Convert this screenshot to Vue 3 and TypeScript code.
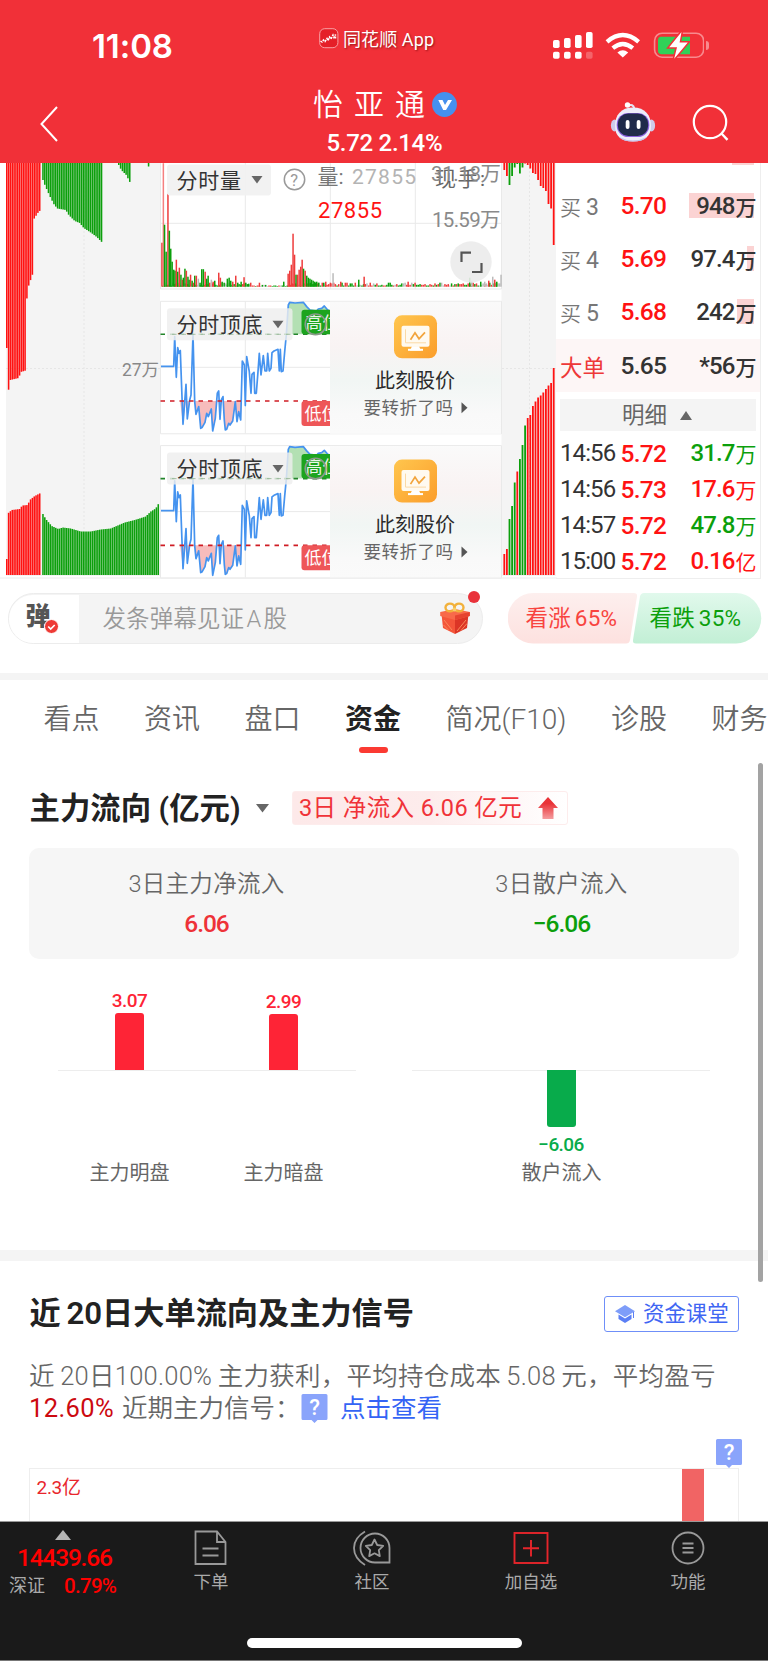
<script setup lang="ts">
type Bar = { x: number; y: number; h: number; c: string }
type Pt = [number, number]

const RED = '#ff1212'
const GREEN = '#0c9f0c'

// Linear interpolation through a list of profile points.
function at(profile: Pt[], x: number): number {
  if (x <= profile[0][0]) return profile[0][1]
  for (let i = 1; i < profile.length; i++) {
    const [x1, y1] = profile[i]
    if (x <= x1) {
      const [x0, y0] = profile[i - 1]
      return y0 + ((y1 - y0) * (x - x0)) / (x1 - x0 || 1)
    }
  }
  return profile[profile.length - 1][1]
}

function fill(profile: Pt[], c: string, base: number, down: boolean): Bar[] {
  const out: Bar[] = []
  const start = profile[0][0]
  const end = profile[profile.length - 1][0]
  for (let x = start; x <= end + 0.01; x += 1.83) {
    const y = at(profile, x)
    out.push(down ? { x, y: base, h: y - base, c } : { x, y, h: base - y, c })
  }
  return out
}

const topRed: Pt[] = [[6, 185], [7.6, 227], [8.4, 226], [9.5, 217], [18, 215], [20, 209], [25, 207.5], [26.2, 131], [28.5, 120], [31.6, 113], [32.5, 57], [34.5, 54], [37, 50], [39.8, 47]]
const topGreen: Pt[] = [[42.2, 17], [44.5, 23], [49, 33], [53, 41], [56.5, 45.5], [65, 47], [68, 52], [74, 58], [79, 60], [83, 65], [90, 69.5], [96, 74], [102.4, 80.5]]
const topGreen2: Pt[] = [[118, 2], [120.5, 7], [125.5, 12], [128, 17], [129.8, 20.5]]
const lowRed: Pt[] = [[6, 396], [7.6, 350], [11, 347], [19, 346], [21.5, 342.5], [27, 342], [29, 337], [34, 333], [39.8, 330]]
const lowGreen: Pt[] = [[42.2, 351], [45, 356], [51, 363], [57.5, 366], [62, 364.5], [70, 365.5], [80, 368.5], [90, 368.5], [100, 366.5], [110, 365.5], [117, 362.5], [124, 359.5], [134, 357], [145, 353.5], [150, 348.5], [155, 345.5], [157.6, 341]]

const leftBars: Bar[] = [
  ...fill(topRed, RED, 0, true),
  ...fill(topGreen, GREEN, 0, true),
  ...fill(topGreen2, GREEN, 0, true),
  { x: 147.8, y: 0, h: 3.5, c: GREEN },
  ...fill(lowRed, RED, 412, false),
  ...fill(lowGreen, GREEN, 412, false),
]

const rTop: [number, string][] = [[7, 'r'], [13, 'r'], [22, 'g'], [13, 'g'], [4.5, 'g'], [1, 'g'], [10.5, 'g'], [4.5, 'g'], [0.5, 'r'], [2, 'r'], [5.5, 'r'], [10, 'r'], [11, 'r'], [17, 'r'], [23, 'r'], [25, 'r'], [28, 'r'], [41, 'r'], [45.5, 'r'], [82, 'r']]
const rLow: [number, string][] = [[391, 'r'], [386, 'r'], [356, 'g'], [343, 'g'], [319.5, 'g'], [308.5, 'r'], [296, 'g'], [282, 'g'], [262.5, 'g'], [255, 'r'], [252, 'r'], [243, 'r'], [238.5, 'r'], [234.5, 'r'], [232.5, 'r'], [229.5, 'r'], [226, 'r'], [222.5, 'r'], [220, 'r'], [205, 'r']]
const tone = (c: string): string => (c === 'r' ? RED : GREEN)
const rightBars: Bar[] = [
  ...rTop.map(([h, c], i) => ({ x: 503.4 + i * 2.6, y: 0, h, c: tone(c) })),
  ...rLow.map(([y, c], i) => ({ x: 503.4 + i * 2.6, y, h: 412 - y, c: tone(c) })),
]

const volColor: Record<string, string> = { r: '#ee3c3c', g: GREEN, s: '#bbbbbb', p: '#f58080' }
const vol: [number, number, string][] = [
  [161.2, 44, 'r'], [162.6, 123.5, 'p'], [163.8, 62, 'g'], [165.4, 35, 'g'], [167.2, 93, 'r'], [168.6, 56, 'g'], [170, 38, 'g'], [171.4, 25, 'g'], [173, 17, 'g'], [174.3, 16, 'g'], [175.6, 27, 'r'], [177, 15, 'g'], [178.6, 19, 'r'], [180.2, 12, 'g'], [181.6, 7, 'r'], [182.6, 9, 'g'], [184.2, 18, 'g'], [185.6, 16, 'r'], [187.2, 10, 'g'], [188.4, 7, 'g'], [189.8, 12, 'r'], [191.4, 6, 'g'], [192.8, 4, 'r'], [194, 11, 'g'], [195.6, 11, 'r'], [197.6, 8, 's'], [199.3, 4, 'g'], [201, 17.5, 'g'], [202.6, 17.5, 'g'], [204.4, 15, 'r'], [206, 8, 'g'], [207.4, 11, 'g'], [209, 4, 'r'], [210.6, 7, 's'], [212.4, 5, 'r'], [214, 6, 'g'], [218, 14, 'r'], [219.6, 9, 'r'], [221.4, 5, 'g'], [226.6, 8, 'g'], [228.4, 9, 'g'], [230, 6, 'g'], [232, 5, 'r'], [235, 11, 'r'], [237, 4, 'g'], [240.4, 5, 'g'], [243.3, 9.5, 'r'], [245, 4, 'g'], [248, 3, 'g'], [258.7, 4, 'r'], [283, 5, 'g'], [287.4, 13, 'r'], [289, 16, 'r'], [290.6, 22, 'r'], [292.3, 53, 'r'], [293.8, 32, 'r'], [295.3, 12, 'g'], [296.8, 12, 'r'], [298.4, 17, 'r'], [300, 20, 'r'], [301.4, 27, 'r'], [302.8, 18, 'g'], [304.4, 16, 'r'], [306, 11, 'g'], [307.6, 9, 'g'], [309.2, 8, 'g'], [310.8, 7, 'g'], [312.4, 6, 'g'], [314, 5, 'g'], [316, 5, 'g'], [318, 4, 'g'], [321.5, 4, 'r'], [325, 5, 'r'], [332.3, 13.5, 's'], [340, 5, 'r'], [358, 7, 'g'], [363.4, 10, 'r'], [407.4, 5, 'r'], [469, 9, 'g'], [471, 6, 's'], [480, 5, 'g'], [484, 5, 's'], [488, 6, 'r'], [492, 10, 's'], [494, 7, 'r'], [496, 5, 'g'], [500.3, 12, 's'],
]
const fillers: [number, number, string][] = Array.from({ length: 204 }, (_, i) => {
  const k = (i * 37 + ((i * i) % 23)) % 17
  const x = 162 + i * 1.66
  const quiet = x > 250 && x < 286
  return [x, quiet ? 0.6 + (k % 3) * 0.6 : 1.2 + (k % 5) * 0.7, k < 7 ? 'g' : k < 13 ? 'r' : 's'] as [number, number, string]
})
const volBars: Bar[] = [...fillers, ...vol].map(([x, h, c]) => ({ x, y: 123.7 - h, h, c: volColor[c] }))

const wave: Pt[] = [
  [18, 244], [56, 244], [59, 155], [64, 277], [68, 188], [72, 205], [76, 197], [84, 418], [93, 298], [97, 402], [104, 345], [108, 330], [114, 148], [119, 350], [123, 388], [131, 365], [137, 430], [141, 428], [150, 412], [155, 385], [160, 395], [169, 372], [173, 438], [181, 400], [187, 325], [191, 318], [195, 403], [199, 345], [204, 335], [208, 405], [211, 435], [215, 433], [221, 415], [225, 420], [233, 408], [241, 350], [246, 410], [251, 380], [257, 405], [262, 228], [268, 240], [271, 362], [275, 215], [283, 260], [288, 325], [291, 268], [297, 262], [299, 325], [304, 325], [309, 260], [313, 205], [318, 270], [325, 212], [330, 258], [335, 258], [338, 205], [343, 258], [348, 250], [351, 203], [357, 198], [369, 193], [373, 258], [376, 193], [379, 260], [384, 258], [389, 200], [394, 150], [400, 60], [404, 52], [420, 54], [445, 52], [455, 65], [465, 75], [485, 78], [490, 72], [500, 70], [508, 63], [518, 75], [525, 80],
]
const toPoint = ([x, y]: Pt): string => `${(x / 3 - 5).toFixed(1)},${((y - 49) / 3).toFixed(1)}`
const wavePoints = wave.map(toPoint).join(' ')
const highArea = ['126.500,33', ...wave.filter((p) => p[0] >= 394).map(toPoint), '170,33'].join(' ')
const lowArea = ['20,99.7', ...wave.filter((p) => p[0] > 77 && p[0] < 262).map(([x, y]) => toPoint([x, Math.max(y, 348)])), '82,99.7'].join(' ')
const panels = [138.3, 282.6]

const bids = [
  { n: '3', p: '5.70', v: '948', w: 65 },
  { n: '4', p: '5.69', v: '97.4', w: 7 },
  { n: '5', p: '5.68', v: '242', w: 17 },
]
const ticks = [
  { t: '14:56', p: '5.72', v: '31.7', u: '万', c: 'down' },
  { t: '14:56', p: '5.73', v: '17.6', u: '万', c: 'up' },
  { t: '14:57', p: '5.72', v: '47.8', u: '万', c: 'down' },
  { t: '15:00', p: '5.72', v: '0.16', u: '亿', c: 'up' },
]
const tabs = ['看点', '资讯', '盘口', '资金', '简况(F10)', '诊股', '财务']
</script>

<template>
  <div class="page">
    <header class="head">
      <div class="status">
        <span class="clock">11:08</span>
        <span class="app">
          <svg width="20" height="21" viewBox="0 0 20 21">
            <rect x=".7" y=".7" width="18.2" height="19" rx="5" fill="#e51f28" stroke="#f9a0a4" stroke-width="1" />
            <path d="M1.5 13l1.500 1 1.500-2 1.500 1.500 2-3 1 2 1.500-3.500 1.500 2 2-4 1 2.500 1.500-3v5" fill="none" stroke="#fff" stroke-width="1.500" stroke-dasharray="2.200 .9" />
          </svg>
          <span>同花顺 App</span>
        </span>
        <svg class="sys" width="152" height="28" viewBox="552 31 152 28">
          <g fill="#fff">
            <rect x="553" y="40" width="6.6" height="8" rx="1.8" /><rect x="564" y="38" width="6.6" height="10" rx="1.8" />
            <rect x="575" y="35" width="6.6" height="13" rx="1.8" /><rect x="586" y="32" width="6.6" height="16" rx="1.8" />
            <rect x="553" y="51.7" width="6.6" height="7" rx="1.8" /><rect x="564" y="51.7" width="6.6" height="7" rx="1.8" />
            <rect x="575" y="51.7" width="6.6" height="7" rx="1.8" /><rect x="586" y="51.7" width="6.6" height="7" rx="1.8" opacity=".25" />
            <path d="M622.8 57.6l-5.4-5.2q5.4-4.3 10.8 0z" />
          </g>
          <g fill="none" stroke="#fff" stroke-width="4.3">
            <path d="M607 41.8q15.8-13.4 31.6 0" /><path d="M612.8 48.2q10-8.3 20 0" />
          </g>
          <rect x="654.6" y="33.2" width="49" height="24" rx="7.5" fill="none" stroke="#f88a8e" stroke-width="1.6" />
          <path d="M661 36.8h29v17.4h-29q-3-.2-3-3.4v-10.6q0-3.2 3-3.4z" fill="#30d158" />
          <path d="M681.5 32l-12.3 15.3h7.8l-2.8 11.4 13.6-16.3h-8.2z" fill="#fff" stroke="#f13038" stroke-width="3" paint-order="stroke" />
        </svg>
        <i class="batcap"></i>
      </div>
      <div class="nav">
        <svg class="back" width="20" height="38" viewBox="0 0 20 38"><path d="M18 2L2.5 19 18 36" fill="none" stroke="#fff" stroke-width="2" /></svg>
        <div class="title">
          <div class="name">
            <span>怡</span><span>亚</span><span>通</span>
            <svg width="25" height="25" viewBox="0 0 25 25"><circle cx="12.5" cy="12.5" r="12.4" fill="#4690ee" /><path d="M6.3 8h4.2l2.5 5 3-5h4L14 18h-2.8z" fill="#fff" /></svg>
          </div>
          <div class="quote">5.72 2.14%</div>
        </div>
        <svg class="bot" width="46" height="42" viewBox="0 0 46 42">
          <path d="M18 5q5-3 6.500 3" fill="none" stroke="#e4e2f2" stroke-width="2" /><circle cx="17.500" cy="4" r="2.700" fill="#fff" />
          <ellipse cx="4.500" cy="24.500" rx="3.600" ry="6" fill="#cfcbea" /><ellipse cx="41.500" cy="24.500" rx="3.600" ry="6" fill="#cfcbea" />
          <path d="M23 6.500c12 0 18 7.500 18 18.500 0 10-6 15.500-18 15.500S5 35 5 25C5 14 11 6.500 23 6.500z" fill="#ededfa" />
          <path d="M9 36q14 7 28 0-4 4.500-14 4.500T9 36z" fill="#c4c0ea" />
          <rect x="6.700" y="12" width="32.600" height="24" rx="11.500" fill="#8c63e0" /><rect x="7.800" y="12.500" width="30.400" height="22.500" rx="10.500" fill="#1f2a4a" />
          <rect x="15.700" y="19" width="3.800" height="9" rx="1.900" fill="#fff" /><rect x="26.700" y="19" width="3.800" height="9" rx="1.900" fill="#fff" />
        </svg>
        <svg class="search" width="37" height="37" viewBox="0 0 37 37"><circle cx="18" cy="18" r="16.2" fill="none" stroke="#fff" stroke-width="2.2" /><path d="M29.500 29.500l6 6.300" stroke="#fff" stroke-width="2.4" /></svg>
      </div>
    </header>

    <section class="market">
      <svg class="charts" width="557" height="417" viewBox="0 0 557 417">
        <defs>
          <linearGradient id="gold" x1="0" y1="0" x2="1" y2="1"><stop offset="0" stop-color="#ffc64e" /><stop offset="1" stop-color="#fb9d2b" /></linearGradient>
          <linearGradient id="haze" x1="0" y1="0" x2="0" y2="1">
            <stop offset="0" stop-color="#fafafa" /><stop offset=".33" stop-color="#f9f3f3" /><stop offset=".6" stop-color="#f1f6f4" /><stop offset=".85" stop-color="#f9f9f9" /><stop offset="1" stop-color="#fafafa" />
          </linearGradient>
          <clipPath id="cut"><rect x="0" y="-1" width="170" height="135" /></clipPath>
        </defs>
        <rect x="6" y="0" width="154" height="413" fill="#f4f4f4" />
        <rect x="501.500" y="0" width="54.500" height="413" fill="#f4f4f4" />
        <g stroke="#e6e6e6" stroke-dasharray="2 2">
          <path d="M84 0V413M6 205.500H160M502 205.500H556M529.500 0V413" fill="none" />
        </g>
        <g>
          <rect v-for="(b, i) in leftBars" :key="'l' + i" :x="b.x" :y="b.y" width="1.550" :height="b.h" :fill="b.c" />
          <rect v-for="(b, i) in rightBars" :key="'r' + i" :x="b.x" :y="b.y" width="1.800" :height="b.h" :fill="b.c" />
        </g>
        <text x="122" y="213" class="cjk" font-size="17.500" fill="#888" textLength="37">27万</text>

        <g fill="none" stroke="#e9e9e9"><path d="M160.500 0V126H501.500V0M160.500 60.300H501.500M245.300 0V126M330.300 0V126M415.300 0V126" /></g>
        <rect v-for="(b, i) in volBars" :key="'v' + i" :x="b.x" :y="b.y" width="1.500" :height="b.h" :fill="b.c" />
        <rect x="167" y="1.500" width="104" height="31" rx="3" fill="#f1f1f1" opacity=".95" />
        <text x="176.500" y="24.500" class="cjk" font-size="21" fill="#333" textLength="64.500">分时量</text>
        <path d="M251.500 13h11l-5.500 7.500z" fill="#666" />
        <circle cx="294.500" cy="16.500" r="10.200" fill="none" stroke="#999" stroke-width="1.500" />
        <text x="290.300" y="22.500" class="num" font-size="16.500" fill="#999">?</text>
        <text x="317.500" y="20.500" class="cjk" font-size="21" fill="#777">量:</text>
        <text x="352" y="21" class="num" font-size="21" fill="#b4b4b4" textLength="64">27855</text>
        <text x="435" y="22.500" class="cjk" font-size="21" fill="#666" textLength="50">现手:</text>
        <text x="431" y="17.500" class="cjk" font-size="20.500" fill="#8a8a8a" textLength="70">31.18万</text>
        <text x="318" y="55" class="num" font-size="22" fill="#ff1212" textLength="64">27855</text>
        <text x="432" y="64" class="cjk" font-size="20.500" fill="#8a8a8a" textLength="68.500">15.59万</text>
        <circle cx="471" cy="99" r="20.700" fill="#ebebeb" opacity=".9" />
        <path d="M461.500 99V89.700H471M481.500 100V109H472" fill="none" stroke="#555" stroke-width="2.200" />

        <g v-for="y in panels" :key="y" :transform="`translate(160 ${y})`">
          <g fill="none" stroke="#e9e9e9"><path d="M.5 0H341.500V132.500H.5zM.5 66H170M85.300 0V132" /></g>
          <g clip-path="url(#cut)">
            <polygon :points="highArea" fill="#b3e0b3" />
            <polygon :points="lowArea" fill="#f7bcbc" />
            <polyline :points="wavePoints" fill="none" stroke="#4593ef" stroke-width="1.700" stroke-linejoin="round" />
            <path d="M.5 33H170" stroke="#23852b" stroke-width="1.600" stroke-dasharray="4.500 5" fill="none" />
            <path d="M.5 99.700H170" stroke="#cf1c24" stroke-width="1.700" stroke-dasharray="4.500 5" fill="none" />
            <rect x="141.500" y="8.500" width="36" height="24.500" rx="3" fill="#1da41f" />
            <text x="145.500" y="27.500" class="cjk" font-size="17" fill="#e8f5e8">高位</text>
            <circle cx="155.500" cy="23" r="10.300" fill="none" stroke="#8a9a8a" stroke-width="1.600" />
            <rect x="141.500" y="99.700" width="36" height="25" rx="3" fill="#ee5658" />
            <text x="144.500" y="118.500" class="cjk" font-size="17" fill="#fff">低位</text>
          </g>
          <rect x="7" y="7" width="125.500" height="32" rx="3" fill="#eee" opacity=".82" />
          <path d="M12 33H132" stroke="#86ac86" stroke-width="1" stroke-dasharray="4.500 5" fill="none" opacity=".7" />
          <text x="16.500" y="30.500" class="cjk" font-size="21" fill="#333" textLength="86">分时顶底</text>
          <path d="M112.500 19.500h11l-5.500 7.500z" fill="#666" />
          <rect x="170" y=".5" width="171" height="132" fill="url(#haze)" />
          <g transform="translate(234 14)">
            <rect width="43" height="43" rx="8" fill="url(#gold)" />
            <rect x="7.500" y="10.500" width="28" height="21" rx="2" fill="#fffaf0" /><path d="M18 31h7l2 4.200H16z" fill="#fff" /><path d="M14 34.500h15" stroke="#fff" stroke-width="2" />
            <path d="M11.500 14v13.500H32" fill="none" stroke="#fbd9a5" /><path d="M16.500 24.500l4.500-7 4 6 6-6.500" fill="none" stroke="#f2a43b" stroke-width="1.700" />
          </g>
          <text x="215" y="86.500" class="cjk" font-size="20" fill="#2b2b2b" textLength="80">此刻股价</text>
          <text x="203.500" y="112.500" class="cjk" font-size="17.500" fill="#666" textLength="89.500">要转折了吗</text>
          <path d="M301.500 101l6 5.500-6 5.500z" fill="#555" />
        </g>
        <path d="M0 415H768" stroke="#ececec" />
      </svg>
      <div class="book">
        <i class="rest"></i>
        <div v-for="b in bids" :key="b.n" class="row bid">
          <span class="lab">买<em>{{ b.n }}</em></span><span class="px">{{ b.p }}</span>
          <span class="amt"><i :style="{ width: b.w + 'px' }"></i><b>{{ b.v }}</b>万</span>
        </div>
        <div class="row bid big"><span class="lab">大单</span><span class="px">5.65</span><span class="amt"><b>*56</b>万</span></div>
        <div class="detail">明细<svg width="12" height="9" viewBox="0 0 12 9"><path d="M6 0l6 9H0z" fill="#666" /></svg></div>
        <div v-for="(k, i) in ticks" :key="i" class="row tick">
          <span class="time">{{ k.t }}</span><span class="px">{{ k.p }}</span><span class="amt" :class="k.c"><b>{{ k.v }}</b>{{ k.u }}</span>
        </div>
      </div>
    </section>

    <section class="danmu">
      <div class="pill">
        <div class="dan">弹<svg width="15" height="15" viewBox="0 0 15 15"><circle cx="7.500" cy="7.500" r="7" fill="#ee3a35" stroke="#fff" /><path d="M4.200 7.500l2.500 2.500 4-4" fill="none" stroke="#fff" stroke-width="1.700" /></svg></div>
        <div class="field">发条弹幕见证 A 股</div>
        <svg class="gift" width="32" height="33" viewBox="0 0 32 33">
          <path d="M2.500 12L16 17v15L4 26z" fill="#f4553a" /><path d="M29.500 12L16 17v15l12-6z" fill="#dc3526" />
          <path d="M1.200 10L16 7l14.800 3v4L16 18 1.200 14z" fill="#f8694a" /><path d="M16 18l14.800-4v-4L16 13.500z" fill="#e64330" />
          <path d="M18 29l9-11M22 28.500l6-7M5 18l8 10M4.500 23l5 5" stroke="#f98a5b" stroke-width="1" />
          <g fill="none" stroke="#f2b13b" stroke-width="2.400"><ellipse cx="11" cy="5.500" rx="4.500" ry="3.900" /><ellipse cx="20" cy="5.500" rx="4.500" ry="3.900" /></g>
          <circle cx="15.500" cy="7.500" r="2" fill="#f7cf6b" />
        </svg>
        <i class="dot"></i>
      </div>
      <div class="vote">
        <svg width="254" height="51" viewBox="0 0 254 51">
          <defs>
            <linearGradient id="vr" x1="0" y1="0" x2="0" y2="1"><stop offset="0" stop-color="#fdefee" /><stop offset="1" stop-color="#fde1df" /></linearGradient>
            <linearGradient id="vg" x1="0" y1="0" x2="0" y2="1"><stop offset="0" stop-color="#e1f9ec" /><stop offset="1" stop-color="#c2efd5" /></linearGradient>
          </defs>
          <path d="M25 0H126q3.500 0 3 3.500L122 47q-.6 3.500-4 3.500H25A25 25 0 0 1 25 0z" fill="url(#vr)" />
          <path d="M228 0H136q-3.400 0-4 3.500L125 47q-.5 3.500 3 3.500H228A25 25 0 0 0 228 0z" fill="url(#vg)" />
        </svg>
        <span class="bull">看涨 65%</span><span class="bear">看跌 35%</span>
      </div>
    </section>

    <nav class="tabs"><span v-for="t in tabs" :key="t" :class="{ on: t === '资金' }">{{ t }}</span></nav>

    <section class="flow">
      <div class="scroll"></div>
      <div class="ftitle">
        <h2>主力流向 (亿元)</h2>
        <svg width="13" height="9" viewBox="0 0 13 9"><path d="M0 0h13L6.500 8.500z" fill="#666" /></svg>
        <div class="chip">
          <span>3日 净流入 6.06 亿元</span>
          <svg width="20" height="22" viewBox="0 0 20 22"><defs><linearGradient id="ar" x1="0" y1="0" x2="0" y2="1"><stop offset=".3" stop-color="#e93338" /><stop offset="1" stop-color="#f59d9f" /></linearGradient></defs><path d="M10 0l10 11h-4.500v11h-11V11H0z" fill="url(#ar)" /></svg>
        </div>
      </div>
      <div class="card">
        <div><p>3日主力净流入</p><b class="r">6.06</b></div>
        <div><p>3日散户流入</p><b class="g">−6.06</b></div>
      </div>
      <div class="columns">
        <div class="plot two">
          <div class="col"><b>3.07</b><i class="h1"></i></div>
          <div class="col"><b>2.99</b><i class="h2"></i></div>
        </div>
        <div class="plot one"><div class="col neg"><i></i><b>−6.06</b></div></div>
      </div>
      <div class="names"><span>主力明盘</span><span>主力暗盘</span><span>散户流入</span></div>
    </section>

    <section class="signal">
      <div class="stitle">
        <h2>近 20日大单流向及主力信号</h2>
        <div class="btn">
          <svg width="20" height="18" viewBox="0 0 20 18"><path d="M10 0l10 6.200-10 6L0 6.200z" fill="#7e9df9" /><path d="M3.500 9.500L10 13.600l6.500-4.100v4.500L10 18l-6.500-4z" fill="#5b7ff5" /><path d="M18.500 7v6" stroke="#5b7ff5" /></svg>
          <span>资金课堂</span>
        </div>
      </div>
      <p class="para l1">近 20日100.00% 主力获利，平均持仓成本 5.08 元，平均盈亏</p>
      <div class="para l2">
        <span class="pct">12.60%</span><span class="sig">近期主力信号：</span>
        <svg class="q" width="27" height="29" viewBox="0 0 26 29"><path d="M1.500 0h23q1.500 0 1.500 1.500v23q0 1.500-1.500 1.500H16l-3 3-3-3H1.500Q0 26 0 24.500v-23Q0 0 1.500 0z" fill="#8aa4fb" /><text x="13" y="21" text-anchor="middle" class="num" font-size="22" font-weight="500" fill="#fff">?</text></svg>
        <span class="link">点击查看</span>
      </div>
      <svg class="q q2" width="26" height="29" viewBox="0 0 26 29"><path d="M1.500 0h23q1.500 0 1.500 1.500v23q0 1.500-1.500 1.500H16l-3 3-3-3H1.500Q0 26 0 24.500v-23Q0 0 1.500 0z" fill="#8aa4fb" /><text x="13" y="21" text-anchor="middle" class="num" font-size="22" font-weight="500" fill="#fff">?</text></svg>
      <div class="frame"><span>2.3亿</span><i></i></div>
    </section>

    <footer class="foot">
      <div class="items">
        <div class="index">
          <svg width="16" height="10" viewBox="0 0 16 10"><path d="M8 0l8 10H0z" fill="#b5b5b5" /></svg>
          <b>14439.66</b>
          <p><span>深证</span><em>0.79%</em></p>
        </div>
        <div class="it a">
          <svg width="36" height="36" viewBox="0 0 36 36" fill="none" stroke="#999" stroke-width="1.800"><path d="M2.500 1.500H24L32.500 12V34h-30zM24 1.500V12h8.500M9.500 18.500h16M9.500 25.500h16" /></svg>
          <span>下单</span>
        </div>
        <div class="it b">
          <svg width="38" height="36" viewBox="0 0 38 36" fill="none" stroke="#999" stroke-width="1.800"><path d="M12 1.500Q1 8 1 18t11 17" /><path d="M22 3.500A14.500 14.500 0 1 0 22 32.500H36.500V18A14.500 14.500 0 0 0 22 3.500z" /><path d="M21.500 9.500l2.700 5.500 6 .9-4.400 4.200 1 6-5.300-2.800-5.300 2.800 1-6-4.400-4.200 6-.9z" stroke-linejoin="round" /></svg>
          <span>社区</span>
        </div>
        <div class="it c">
          <svg width="36" height="36" viewBox="0 0 36 36" fill="none" stroke="#e5252b" stroke-width="1.900"><rect x="1.500" y="3" width="33" height="30" /><path d="M18 10v16.500M10 18.200h16" /></svg>
          <span>加自选</span>
        </div>
        <div class="it d">
          <svg width="36" height="36" viewBox="0 0 36 36" fill="none" stroke="#999" stroke-width="1.800"><circle cx="18" cy="18" r="15.500" /><path d="M12.500 13.500h11M12.500 18h11M12.500 22.500h11" /></svg>
          <span>功能</span>
        </div>
      </div>
      <div class="home"></div>
    </footer>
  </div>
</template>

<style>
html, body { margin: 0; background: #fff; }
</style>

<style scoped>
* { box-sizing: border-box; margin: 0; padding: 0; }
.page { width: 768px; height: 1662px; overflow: hidden; background: #fff; font-family: Roboto, "Noto Sans CJK SC", sans-serif; white-space: nowrap; color: #333; }
i, em { font-style: normal; }
svg { display: block; flex: none; }
.cjk { font-family: Roboto, "Noto Sans CJK SC", sans-serif; }
.num { font-family: Roboto, sans-serif; }

.head { height: 163px; background: #f13038; color: #fff; display: flex; flex-direction: column; }
.status { height: 76px; display: flex; align-items: flex-start; padding-top: 28px; }
.clock { margin-left: 92px; width: 227px; font: 600 33px/37px Inter, sans-serif; letter-spacing: -.1px; }
.app { display: flex; width: 233px; font-size: 18px; line-height: 24px; text-shadow: 1px 1px 2px rgba(90, 0, 0, .6); }
.app span { margin-left: 4px; letter-spacing: .1px; }
.sys { margin-top: 3px; }
.batcap { width: 3px; height: 9px; margin: 13px 0 0 2px; background: #f88a8e; border-radius: 0 4px 4px 0; }
.nav { height: 87px; display: flex; }
.back { margin: 29px 0 0 39px; }
.title { margin-left: 254px; width: 298px; }
.name { display: flex; height: 53px; align-items: center; padding-top: 4px; }
.name span { width: 41px; font-size: 30px; line-height: 40px; font-weight: 350; }
.name span:nth-child(3) { width: 36.500px; }
.quote { margin-left: 13.500px; font-size: 24px; line-height: 29px; font-weight: 500; letter-spacing: -.3px; }
.bot { margin: 25px 0 0 -1px; }
.search { margin: 28px 0 0 36px; }

.market { height: 416px; display: flex; overflow: hidden; }
.book { width: 205px; height: 416px; padding-top: 16px; border-right: 1px solid #eee; position: relative; margin-left: -1px; border-bottom: 1px solid #eee; }
.rest { position: absolute; top: 0; left: 176px; width: 22px; height: 1.500px; background: #fbd3d3; }
.row { display: flex; align-items: center; padding-left: 4px; }
.bid { height: 53px; }
.lab { width: 60.500px; font-size: 21px; color: #777; font-weight: 350; }
.lab em { margin-left: 5px; font-size: 23px; font-weight: 400; }
.px { width: 60px; font-size: 24.500px; font-weight: 500; color: #ff1212; letter-spacing: -.7px; }
.amt { flex: 1; display: flex; align-items: center; justify-content: flex-end; padding-right: 3.500px; font-size: 21px; font-weight: 500; position: relative; z-index: 0; height: 26px; }
.amt b { font-size: 24px; font-weight: 500; letter-spacing: -.9px; margin-right: 1px; }
.amt i { position: absolute; right: 6px; top: 0; height: 25px; background: #fbd3d3; z-index: -1; }
.big { background: #fdf6f6; margin-top: 1px; }
.big .lab { color: #ee3838; font-size: 22.500px; font-weight: 400; }
.big .px { color: #333; }
.detail { margin: 7px 0 4px 4px; width: 196px; height: 32px; background: #f4f4f4; color: #666; font-size: 22.500px; line-height: 32px; display: flex; align-items: center; padding-left: 62px; gap: 13px; }
.tick { height: 36px; }
.tick .amt { font-weight: 400; }
.time { width: 60.500px; font-size: 24px; letter-spacing: -.9px; }
.up { color: #ff1212; }
.down { color: #0c9f0c; }

.danmu { height: 101px; border-bottom: 7px solid #f4f4f4; display: flex; align-items: flex-start; padding: 14px 0 0 7.500px; }
.pill { position: relative; width: 475px; height: 51px; border: 1.500px solid #ececec; border-radius: 26px; background: #f4f4f4; display: flex; align-items: center; }
.dan { width: 70.500px; height: 48px; background: #fff; border-radius: 25px 0 0 25px; padding-left: 17px; font-size: 25px; line-height: 44px; font-weight: 900; color: #555; position: relative; }
.dan svg { position: absolute; left: 35px; top: 24px; }
.field { padding-left: 23.500px; font-size: 23.500px; color: #999; width: 360px; line-height: 46px; font-weight: 350; word-spacing: -3.500px; letter-spacing: .1px; }
.gift { margin-top: -1px; }
.dot { position: absolute; right: 1.500px; top: -3px; width: 12px; height: 12px; border-radius: 50%; background: #e9323a; }
.vote { margin-left: 25.500px; position: relative; width: 254px; height: 51px; }
.vote span { position: absolute; top: 0; line-height: 50px; font-size: 22.500px; word-spacing: -2.500px; letter-spacing: .35px; }
.bull { left: 17.500px; color: #f8443f; }
.bear { left: 141.500px; color: #0c9f0c; }

.tabs { height: 83px; padding: 21px 0 0 43.500px; display: flex; gap: 44.500px; font-size: 28px; line-height: 38px; color: #666; font-weight: 350; overflow: hidden; }
.tabs span { flex: none; height: 54px; display: flex; flex-direction: column; align-items: center; }
.tabs .on { font-weight: 700; color: #222; }
.tabs .on::after { content: ""; width: 29px; height: 6px; flex: none; border-radius: 3px; background: #fb3a32; margin-top: 8px; }

.flow { position: relative; height: 487px; padding-top: 28px; z-index: 0; }
.scroll { position: absolute; left: 757.500px; top: 0; width: 5px; height: 519px; border-radius: 3px; background: #a3a3a3; z-index: 2; }
.ftitle { height: 34px; display: flex; align-items: center; padding-left: 29.500px; }
.ftitle h2 { width: 226.500px; font-size: 30.400px; line-height: 36px; font-weight: 600; color: #222; padding-top: 2px; }
.chip { margin-left: 23px; width: 276px; height: 34px; border: 1px solid #fdecec; border-radius: 3px; background: linear-gradient(90deg, #fde9e9, #fdecec 50%, #fff); color: #f03238; font-size: 23.500px; line-height: 34px; padding-left: 6px; display: flex; align-items: center; }
.chip span { width: 239px; letter-spacing: .4px; }
.card { margin: 23px 0 0 29px; width: 710px; height: 111px; border-radius: 10px; background: #f6f6f6; display: flex; text-align: center; padding-top: 20px; }
.card div { flex: 1; }
.card p { font-size: 23.500px; line-height: 32px; color: #666; font-weight: 350; letter-spacing: .3px; }
.card b { display: block; margin-top: 10px; font-size: 24.500px; line-height: 28px; font-weight: 500; letter-spacing: -1px; }
.r { color: #ee3238; }
.g { color: #0c9f0c; }
.columns { height: 200px; display: flex; padding-left: 58px; gap: 56px; }
.plot { width: 298px; height: 200px; display: flex; position: relative; }
.plot::after { content: ""; position: absolute; top: 111px; left: 0; width: 298px; height: 1px; background: #ededed; z-index: -1; }
.two { padding-left: 36.500px; gap: 84px; }
.col { width: 70px; height: 111px; display: flex; flex-direction: column; align-items: center; justify-content: flex-end; }
.col b { font-size: 19px; font-weight: 500; line-height: 24px; color: #fe2436; letter-spacing: -.6px; }
.col i { width: 29px; background: #fe2436; border-radius: 3px 3px 0 0; }
.h1 { height: 57px; }
.h2 { height: 56px; }
.one { padding-left: 114px; }
.neg { height: 200px; padding-top: 111px; justify-content: flex-start; }
.neg i { height: 57px; background: #08ab4b; border-radius: 0 0 3px 3px; }
.neg b { color: #08ab4b; margin-top: 5.500px; }
.names { height: 28px; display: flex; font-size: 20px; line-height: 28px; color: #666; padding-left: 89.500px; }
.names span { width: 154px; }
.names span:nth-child(3) { margin-left: 124px; }

.signal { height: 271px; border-top: 11px solid #f4f4f4; }
.stitle { height: 36px; margin: 35px 29px 0 29.500px; display: flex; justify-content: space-between; align-items: center; }
.stitle h2 { font-size: 31.200px; line-height: 34px; font-weight: 600; color: #222; word-spacing: -2px; }
.btn { width: 135px; height: 36px; border: 1px solid #6f8ff8; border-radius: 3px; display: flex; align-items: center; padding-left: 10px; gap: 8px; color: #3f66f3; font-size: 21.400px; line-height: 36px; }
.para { font-size: 25.500px; line-height: 32px; color: #666; font-weight: 350; padding-left: 29px; }
.l1 { margin-top: 28px; letter-spacing: .25px; word-spacing: -1px; }
.l2 { display: flex; height: 32px; }
.pct { width: 93px; color: #cc0a10; font-weight: 400; letter-spacing: .4px; }
.sig { width: 179px; }
.q { margin-top: 2px; }
.link { margin-left: 12px; color: #3464f5; font-weight: 400; }
.q2 { margin: 14.500px 0 0 715.500px; }
.frame { margin-left: 29px; width: 710px; height: 60px; border: 1px solid #eee; display: flex; justify-content: space-between; }
.frame span { font-size: 19px; line-height: 38px; color: #e8262c; margin-left: 6.500px; letter-spacing: -.3px; }
.frame i { width: 22px; height: 60px; margin-right: 34.500px; background: #f16464; }

.foot { height: 140px; background: #1a1a1a; border-top: 1px solid #999; border-bottom: 1px solid #777; position: relative; }
.items { display: flex; height: 90px; padding-top: 8px; }
.index { width: 128px; color: #f00; }
.index svg { margin-left: 55px; }
.index b { display: block; margin: 4px 0 0 17px; font-size: 24.500px; line-height: 28px; font-weight: 500; letter-spacing: -1.200px; }
.index p { display: flex; line-height: 28px; padding-left: 9px; }
.index span { width: 55px; color: #aaa; font-size: 18px; }
.index em { font-size: 20.500px; font-weight: 500; letter-spacing: -.7px; }
.it { width: 80px; display: flex; flex-direction: column; align-items: center; color: #aaa; font-size: 17.500px; line-height: 26px; }
.it span { margin-top: 3px; }
.a { margin-left: 43px; }
.b { margin-left: 81px; }
.c { margin-left: 79px; }
.d { margin-left: 77px; }
.home { width: 275px; height: 10px; border-radius: 5px; background: #fff; margin: 26px 0 0 247px; }
</style>
